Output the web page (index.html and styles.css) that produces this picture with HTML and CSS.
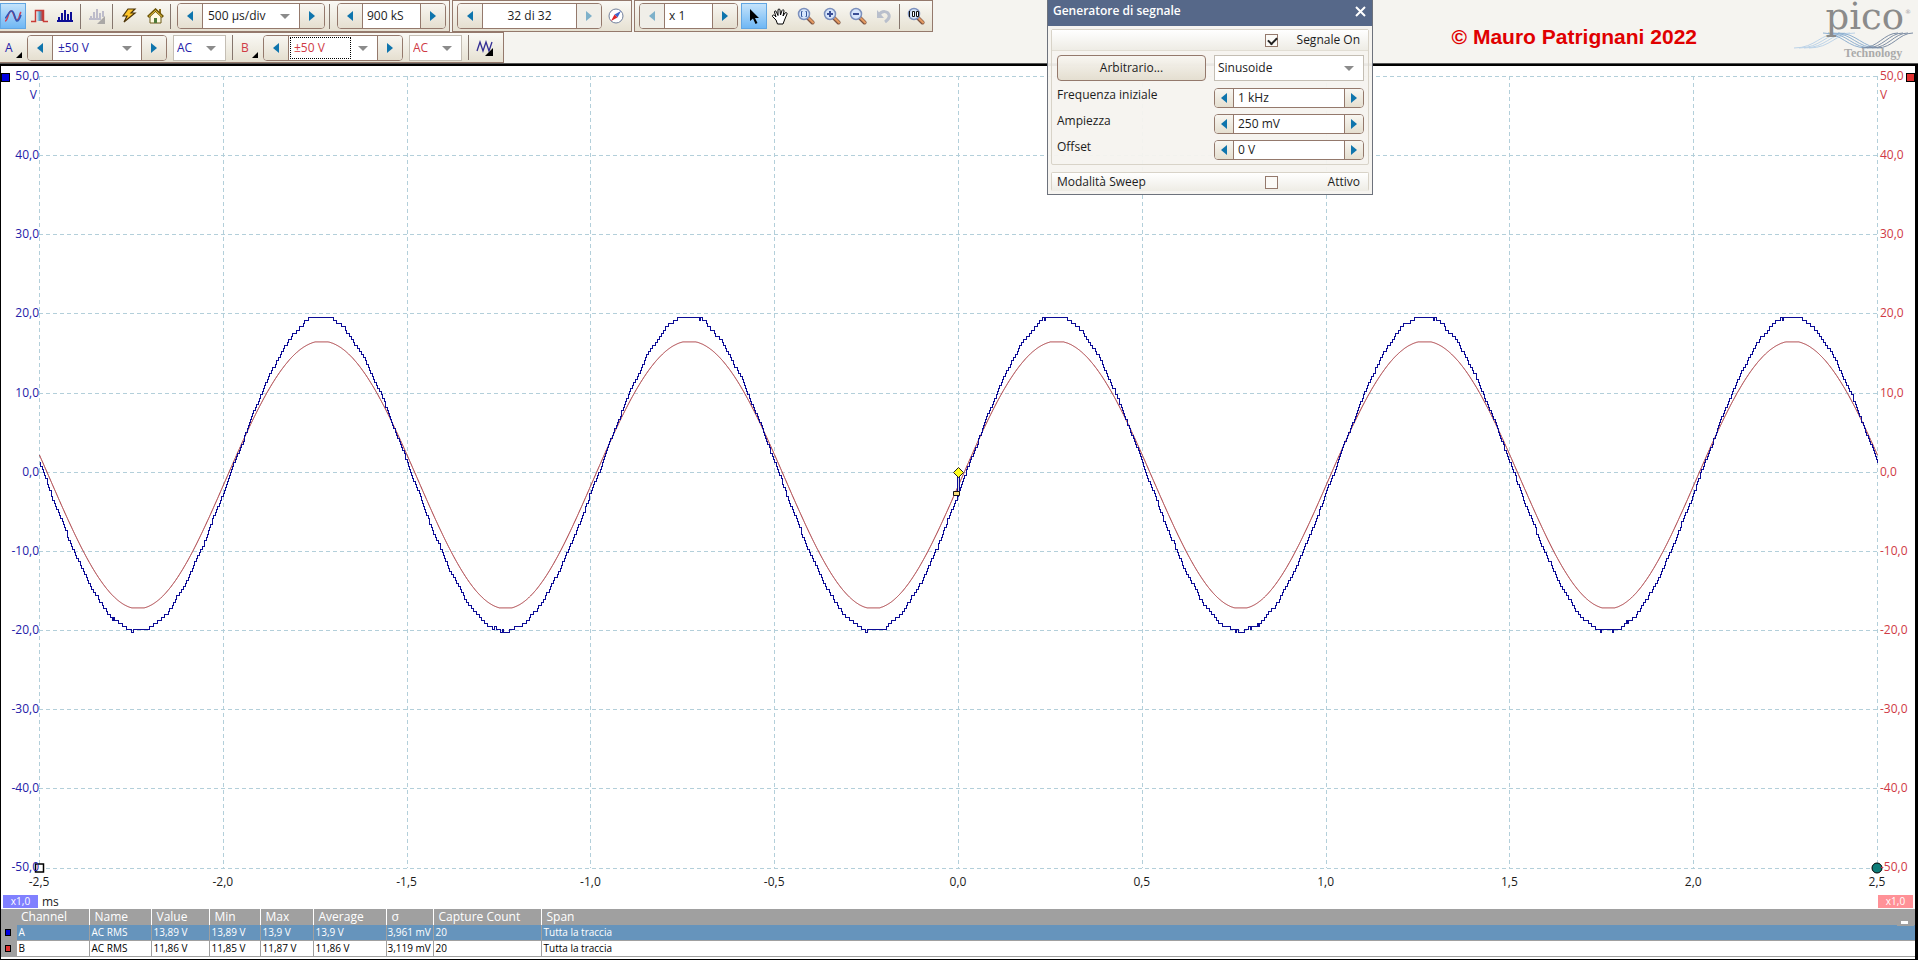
FILE: index.html
```
<!DOCTYPE html>
<html lang="it">
<head>
<meta charset="utf-8">
<title>Oscilloscopio</title>
<link rel="stylesheet" href="styles.css">
</head>
<body>
<svg class="defs" aria-hidden="true">
  <symbol id="left" viewBox="0 0 6 10"><path d="M6 0v10L0 5z" fill="#0f75ad"/></symbol>
  <symbol id="right" viewBox="0 0 6 10"><path d="M0 0v10l6-5z" fill="#0f75ad"/></symbol>
  <symbol id="lens" viewBox="0 0 18 18">
    <path d="M10.500 10.500l5 5" stroke="#7c5240" stroke-width="4" stroke-linecap="round"/>
    <path d="M11 10.500l5 5" stroke="#e39a62" stroke-width="2.200" stroke-linecap="round"/>
    <circle cx="7" cy="7" r="5.500" fill="#d7e6fb" stroke="#7c90bd" stroke-width="1.500"/>
  </symbol>
</svg>
<header class="top">
  <div class="bars">
    <div class="row">
      <div class="group g1">
        <button class="tool active" aria-label="Oscilloscopio"><svg width="18" height="16" viewBox="0 0 18 16" fill="none"><path d="M1 13C4 13 4 3 7 3s3 9 6 9 2-6 4-8" stroke="#cf4257" stroke-width="1.600"/><path d="M1 10C3 10 5 2 8 3s3 10 5 10 3-3 4-6" stroke="#3157b8" stroke-width="1.600"/></svg></button>
        <button class="tool" aria-label="Persistenza"><svg width="17" height="14" viewBox="0 0 17 14"><defs><linearGradient id="pg"><stop offset="0" stop-color="#fff"/><stop offset=".5" stop-color="#5f9fc4"/><stop offset="1" stop-color="#c8322b"/></linearGradient></defs><path d="M5 1h7v11H5z" fill="url(#pg)"/><path d="M0 12.500h4.500v-11h8v11H17" fill="none" stroke="#c93a35" stroke-width="1.500"/></svg></button>
        <button class="tool" aria-label="Spettro"><svg width="16" height="14" viewBox="0 0 16 14"><path d="M0 12h16M2 12V8M5 12V4M8 12V1M11 12V5M14 12V3" stroke="#0d0d96" stroke-width="2"/></svg></button>
        <i class="sep"></i>
        <button class="tool" aria-label="Opzioni spettro" disabled><svg width="17" height="16" viewBox="0 0 17 16"><path d="M0 11h12M2 11V8M5 11V4M8 11V1M11 11V5M14 9V3" stroke="#bdbcca" stroke-width="2"/><path d="M16 8v8H8z" fill="#aaa8a6"/></svg></button>
        <i class="sep"></i>
        <button class="tool" aria-label="Configurazione automatica"><svg width="16" height="16" viewBox="0 0 16 16"><path d="M7 1h7l-4 4h4L3 14l3-6H2z" fill="#ffc629" stroke="#4d3508" stroke-width="1.200"/></svg></button>
        <button class="tool" aria-label="Pagina iniziale"><svg width="17" height="16" viewBox="0 0 17 16"><path d="M3 8l5.500-6L14 8v7H3z" fill="#fffbe2" stroke="#6d5a16"/><path d="M12 1h2v4h-2z" fill="#8c6d1a"/><path d="M1 9l7.500-7L16 9" fill="none" stroke="#6c5406" stroke-width="3"/><path d="M2 8.500L8.500 2.500 15 8.500" fill="none" stroke="#f0ce45"/><path d="M7 10h3v5H7z" fill="#4d7a3a"/></svg></button>
        <i class="sep"></i>
        <div class="spin timebase"><button aria-label="Precedente"><svg><use href="#left"/></svg></button><span class="combo"><select aria-label="Base tempi"><option>500 µs/div</option></select></span><button aria-label="Successivo"><svg><use href="#right"/></svg></button></div>
        <i class="sep"></i>
        <div class="spin samples"><button aria-label="Meno campioni"><svg><use href="#left"/></svg></button><input aria-label="Campioni" value="900 kS"><button aria-label="Più campioni"><svg><use href="#right"/></svg></button></div>
      </div>
      <div class="group g2">
        <div class="spin buffer"><button aria-label="Buffer precedente"><svg><use href="#left"/></svg></button><input aria-label="Buffer" value="32 di 32"><button aria-label="Buffer successivo" disabled><svg><use href="#right"/></svg></button></div>
        <button class="tool" aria-label="Navigatore buffer"><svg width="16" height="16" viewBox="0 0 16 16"><circle cx="8" cy="8" r="7" fill="#fff" stroke="#71809c"/><path d="M13 3L9.500 9.500l-3-3z" fill="#3f64c8"/><path d="M3 13l3.500-6.500 3 3z" fill="#e0262b"/></svg></button>
      </div>
      <div class="group g3">
        <div class="spin zoomer"><button aria-label="Riduci" disabled><svg><use href="#left"/></svg></button><input aria-label="Zoom" value="x 1"><button aria-label="Aumenta"><svg><use href="#right"/></svg></button></div>
        <button class="tool active" aria-label="Selezione"><svg width="12" height="17" viewBox="0 0 12 17"><path d="M2 1v12l3-2.500L7.500 16l2-1L7 10h4z"/></svg></button>
        <button class="tool" aria-label="Mano"><svg width="18" height="17" viewBox="0 0 18 17"><path d="M5 12L1.500 8.500c-.5-1.500 1-2 2-1L5 9 3.500 4c0-1.500 1.500-1.500 2 0L7 7.500 7 2c.3-1.500 1.700-1.500 2 0l.5 5L11 2.500c.7-1.300 2-.8 2 .5l-1 5 2-3c1-1 2.300-.2 2 1L13.500 12 12 16H6.500z" fill="#fff" stroke="#000"/></svg></button>
        <button class="tool" aria-label="Zoom area"><svg width="18" height="18"><use href="#lens"/><path d="M5.500 4.500h-1v5h1M8.500 4.500h1v5h-1" fill="none" stroke="#31549c"/></svg></button>
        <button class="tool" aria-label="Ingrandisci"><svg width="18" height="18"><use href="#lens"/><path d="M4 7h6M7 4v6" stroke="#3a4f96" stroke-width="2"/></svg></button>
        <button class="tool" aria-label="Rimpicciolisci"><svg width="18" height="18"><use href="#lens"/><path d="M4 7h6" stroke="#3a4f96" stroke-width="2"/></svg></button>
        <button class="tool" aria-label="Annulla zoom" disabled><svg width="16" height="14" viewBox="0 0 16 14"><path d="M3 6c3-5 9-4 10 0 1 3-1 5-4 7" fill="none" stroke="#b9bfcc" stroke-width="3"/><path d="M1 1v8h7z" fill="#b9bfcc"/></svg></button>
        <i class="sep"></i>
        <button class="tool" aria-label="Zoom 100%"><svg width="18" height="18"><use href="#lens"/><path d="M2.500 4v6M5.500 4.500h2v5h-2zM9.500 4.500h2v5h-2z" fill="#fff" stroke="#111"/></svg></button>
      </div>
    </div>
    <div class="row">
      <div class="group c1">
        <button class="chan blue">A</button>
        <div class="spin range"><button aria-label="A meno"><svg><use href="#left"/></svg></button><span class="combo"><select class="blue" aria-label="Scala A"><option>±50 V</option></select></span><button aria-label="A più"><svg><use href="#right"/></svg></button></div>
        <span class="combo coupling"><select class="blue" aria-label="Accoppiamento A"><option>AC</option></select></span>
        <i class="sep"></i>
        <button class="chan red">B</button>
        <div class="spin range"><button aria-label="B meno"><svg><use href="#left"/></svg></button><span class="combo"><select class="red focus" aria-label="Scala B"><option>±50 V</option></select></span><button aria-label="B più"><svg><use href="#right"/></svg></button></div>
        <span class="combo coupling"><select class="red" aria-label="Accoppiamento B"><option>AC</option></select></span>
        <i class="sep"></i>
        <button class="tool" aria-label="Canali matematici"><svg width="18" height="16" viewBox="0 0 18 16"><path d="M1 11L4 2l3 9 3-9 3 9 3-9" fill="none" stroke="#322d94" stroke-width="1.300"/><path d="M17 8v8H9z"/></svg></button>
      </div>
    </div>
  </div>
  <div class="credit">© Mauro Patrignani 2022</div>
  <div class="logo" role="img" aria-label="pico Technology">
    <svg width="124" height="60" viewBox="0 0 124 60">
      <g fill="none">
        <g stroke="#bcd3e8"><path d="M2 48C24 48 28 33 48 33"/><path d="M7 48C29 48 33 33 53 33"/><path d="M12 48C34 48 38 33 58 33"/><path d="M17 48C39 48 43 33 63 33"/></g>
        <g stroke="#8fb0d0"><path d="M31 33C50 33 55 48 75 48"/><path d="M36 33C55 33 60 48 80 48"/><path d="M41 33C60 33 65 48 85 48"/><path d="M46 33C65 33 70 48 90 48"/></g>
        <g stroke="#7c8ca3"><path d="M70 48C86 48 92 33 106 33"/><path d="M75 48C91 48 97 33 111 33"/><path d="M80 48C96 48 102 33 116 33"/><path d="M85 48C101 48 107 33 121 33"/></g>
      </g>
      <text class="pico" x="112" y="29" text-anchor="end">pico</text>
      <text class="reg" x="113" y="14">®</text>
      <text class="tech" x="52" y="57">Technology</text>
    </svg>
  </div>
</header>

<main class="scope">
  <ol class="yaxis blue" id="ya"></ol>
  <svg class="plot" id="plot" role="img" aria-label="Tracce dei canali A e B"></svg>
  <ol class="yaxis right red" id="yb"></ol>
  <ol class="xaxis" id="xa"></ol>
  <div class="scales"><span class="tag a">x1,0</span><span class="unit">ms</span><span class="tag b">x1,0</span></div>
  <i class="mark ma"></i><i class="mark mb"></i>
</main>

<section class="measures">
  <table>
    <colgroup><col class="k0"><col class="k1"><col class="k2"><col class="k3"><col class="k4"><col class="k5"><col class="k6"><col class="k7"><col class="k8"><col></colgroup>
    <thead><tr><th></th><th>Channel</th><th>Name</th><th>Value</th><th>Min</th><th>Max</th><th>Average</th><th>σ</th><th>Capture Count</th><th>Span</th></tr></thead>
    <tbody>
      <tr class="selected"><td class="key"><i class="sw a"></i></td><td>A</td><td>AC RMS</td><td>13,89 V</td><td>13,89 V</td><td>13,9 V</td><td>13,9 V</td><td class="num">3,961 mV</td><td>20</td><td>Tutta la traccia</td></tr>
      <tr><td class="key"><i class="sw b"></i></td><td>B</td><td>AC RMS</td><td>11,86 V</td><td>11,85 V</td><td>11,87 V</td><td>11,86 V</td><td class="num">3,119 mV</td><td>20</td><td>Tutta la traccia</td></tr>
    </tbody>
  </table>
  <button class="collapse" aria-label="Riduci misure"></button>
</section>

<section class="dialog" role="dialog" aria-labelledby="dt">
  <div class="title"><h2 id="dt">Generatore di segnale</h2><button class="close" aria-label="Chiudi"><svg width="11" height="11" viewBox="0 0 11 11"><path d="M1 1l9 9M10 1L1 10" stroke="#fff" stroke-width="2"/></svg></button></div>
  <div class="panel">
    <div class="phead"><input type="checkbox" id="on" checked><label for="on">Segnale On</label></div>
    <div class="form">
      <button class="arb">Arbitrario...</button>
      <span class="combo wave"><select aria-label="Forma d'onda"><option>Sinusoide</option></select></span>
      <label for="fq">Frequenza iniziale</label>
      <div class="spin small"><button aria-label="Frequenza meno"><svg><use href="#left"/></svg></button><input id="fq" value="1 kHz"><button aria-label="Frequenza più"><svg><use href="#right"/></svg></button></div>
      <label for="am">Ampiezza</label>
      <div class="spin small"><button aria-label="Ampiezza meno"><svg><use href="#left"/></svg></button><input id="am" value="250 mV"><button aria-label="Ampiezza più"><svg><use href="#right"/></svg></button></div>
      <label for="of">Offset</label>
      <div class="spin small"><button aria-label="Offset meno"><svg><use href="#left"/></svg></button><input id="of" value="0 V"><button aria-label="Offset più"><svg><use href="#right"/></svg></button></div>
    </div>
  </div>
  <div class="panel sweep"><div class="phead"><span>Modalità Sweep</span><input type="checkbox" id="sw"><label for="sw">Attivo</label></div></div>
</section>
<script src="scope.js"></script>
</body>
</html>
```
FILE: styles.css
```
* { box-sizing: border-box; }
body { margin: 0; height: 100vh; display: flex; flex-direction: column; background: #000; color: #1c1c1c; font: 12px/16px "Open Sans", "Noto Sans", sans-serif; overflow: hidden; }
button, input, select { font: inherit; color: inherit; margin: 0; padding: 0; border: 0; background: none; border-radius: 0; }
ol { margin: 0; padding: 0; list-style: none; }
.defs { position: absolute; width: 0; height: 0; }
.blue { color: #2420a8; }
.red { color: #cf3a45; }

.top { display: flex; background: #f5f4f0; border-bottom: 1px solid #555; height: 64px; flex: none; }
.bars { flex: none; }
.row { display: flex; gap: 2px; height: 32px; }
.row + .row { height: 31px; }
.group { display: flex; align-items: center; border: 1px solid #94796c; border-left-width: 0; background: linear-gradient(#faf9f5, #e6e1d2); }
.g1 { padding-right: 3px; }
.g2, .g3 { border-left-width: 1px; padding-left: 4px; }
.g2 { padding-right: 2px; }
.g3 { padding-right: 3px; }
.c1 { padding-right: 5px; }
.tool { width: 26px; height: 26px; display: flex; align-items: center; justify-content: center; flex: none; }
.tool.active { background: linear-gradient(#c4e3fb, #6fb7f4); border: 1px solid #62a6e2; }
.g3 .active { margin-left: 3px; }
.sep { width: 1px; height: 25px; margin: 0 3px 0 2px; background: #85766d; flex: none; }
.spin { display: flex; height: 26px; border: 1px solid #94796c; border-radius: 4px; background: #fff; overflow: hidden; flex: none; }
.spin > button { width: 25px; flex: none; display: flex; align-items: center; justify-content: center; background: linear-gradient(#f8f6f1, #e5dfd0); }
.spin svg { width: 6px; height: 10px; }
.spin > button:disabled { background: #f0eee8; }
.spin > button:disabled svg { opacity: .5; }
.spin > button:first-child { border-right: 1px solid #94796c; }
.spin > button:last-child { border-left: 1px solid #94796c; }
.spin input { flex: 1; min-width: 0; padding: 0 4px; }
.combo { position: relative; flex: 1; display: flex; min-width: 0; background: #fff; }
.combo::after { content: ""; position: absolute; right: 9px; top: 50%; margin-top: -2px; border: 5px solid transparent; border-top-color: #8b8b8b; border-bottom: 0; pointer-events: none; }
.combo select { appearance: none; width: 100%; padding: 0 5px; }
.timebase { width: 148px; margin: 0 2px 0 3px; }
.samples { width: 109px; margin-left: 4px; }
.buffer { width: 145px; margin-right: 1px; }
.buffer input { text-align: center; }
.zoomer { width: 99px; }
.range { width: 140px; margin-right: 6px; }
.coupling { flex: none; width: 53px; height: 26px; border: 1px solid #c4beb4; margin-right: 4px; }
.coupling select { padding-left: 3px; }
.focus { outline: 1px dotted #000; outline-offset: -2px; margin-right: 25px; }
.chan { position: relative; width: 27px; height: 26px; padding-left: 5px; text-align: left; flex: none; }
.chan::after { content: ""; position: absolute; right: 5px; bottom: 3px; border: 3px solid #000; border-left-color: transparent; border-top-color: transparent; }
.credit { margin-left: auto; margin-right: 95px; align-self: center; padding-top: 10px; font: bold 21px/26px "Liberation Sans", Arial, sans-serif; color: #e00000; }
.logo { padding-right: 2px; flex: none; }
.pico { font: 37px "DejaVu Serif", serif; fill: #8b8b8b; }
.reg { font: 6px "DejaVu Serif", serif; fill: #9b9b9b; }
.tech { font: bold 12px "Liberation Serif", serif; fill: #aaa; }

.scope { position: relative; flex: 1; min-height: 0; margin: 2px 3px 0 1px; background: #fff; display: grid; grid-template-columns: 38px 1fr 38px; grid-template-rows: 1fr 27px 14px; padding-top: 10px; }
.plot { width: 100%; height: 100%; display: block; overflow: visible; min-height: 0; }
.yaxis { display: flex; flex-direction: column; justify-content: space-between; text-align: right; min-height: 0; }
.yaxis.right { text-align: left; padding-left: 3px; }
.yaxis li { height: 0; line-height: 0; position: relative; }
.yaxis small { font-size: inherit; position: absolute; right: 2px; top: 19px; }
.yaxis.right small { right: auto; left: 0; }
.xaxis { grid-column: 2; display: flex; justify-content: space-between; align-items: center; padding-top: 1px; }
.xaxis li { width: 0; display: flex; justify-content: center; white-space: nowrap; }
.scales { grid-column: 1 / -1; display: flex; gap: 4px; padding: 0 2px; align-items: start; }
.tag { width: 35px; height: 13px; line-height: 13px; font-size: 10px; text-align: center; color: #fff; }
.tag.a { background: #8080ff; }
.tag.b { background: #ff9197; margin-left: auto; }
.unit { line-height: 14px; }
.mark { position: absolute; top: 7px; width: 9px; height: 9px; border: 1px solid #000; }
.ma { left: 0; background: #0000e0; }
.mb { right: 0; background: #e03030; }

.measures { position: relative; flex: none; margin: 0 3px 1px 1px; background: #fff; padding-bottom: 2px; }
table { width: 100%; table-layout: fixed; border-collapse: collapse; }
th { height: 16px; padding: 0 5px; background: #a0a0a0; color: #fff; font-weight: normal; font-size: 12px; line-height: 16px; text-align: left; border-left: 1px solid #fff; }
th:nth-child(-n+2) { border-left: 0; }
td { height: 16px; padding: 0 2px; font-size: 10px; line-height: 15px; white-space: nowrap; border-left: 1px solid #a0a0a0; border-bottom: 1px solid #a0a0a0; color: #000; }
.selected td { background: #6694bc; color: #fff; }
td.key, .selected .key { background: #a0a0a0; padding: 0 0 0 4px; border: 0; }
td.num { padding: 0 1px; }
.sw { display: block; width: 6px; height: 7px; border: 1px solid #000; }
.sw.a { background: #0000e0; }
.sw.b { background: #e03030; }
.k0 { width: 15px; } .k1 { width: 73px; } .k2 { width: 62px; } .k3 { width: 58px; } .k4 { width: 51px; } .k5 { width: 53px; } .k6 { width: 73px; } .k7 { width: 47px; } .k8 { width: 108px; }
.collapse { position: absolute; right: 1px; top: 10px; width: 17px; height: 7px; background: #a0a0a0; }
.collapse::after { content: ""; position: absolute; left: 4px; top: 2px; width: 7px; height: 3px; background: #fff; }

.dialog { position: absolute; left: 1047px; top: 0; width: 326px; border: 1px solid #6d727c; border-top: 0; background: rgba(245, 243, 239, .95); padding-bottom: 3px; }
.title { display: flex; align-items: center; justify-content: space-between; height: 26px; padding: 0 6px 4px 5px; background: #566889; color: #fff; }
.title h2 { margin: 0; font-size: 12px; font-weight: 600; }
.close { display: flex; }
.panel { margin: 3px 3px 7px; border: 1px solid #d8d3c8; border-radius: 2px; }
.phead { display: flex; align-items: center; height: 21px; padding: 0 8px 0 5px; background: linear-gradient(#fff, #eeece5); border-bottom: 1px solid #e2ded4; }
.phead input { appearance: none; width: 13px; height: 13px; border: 1px solid #94796c; background: #fbfaf7; margin: 0 0 0 208px; position: relative; flex: none; }
.phead input:checked::after { content: ""; position: absolute; left: 2px; top: 2px; width: 7px; height: 4px; border: solid #222; border-width: 0 0 2px 2px; transform: rotate(-45deg); }
.phead label { margin-left: auto; }
.phead span { width: 208px; }
.phead span + input { margin-left: 0; }
.form { display: grid; grid-template-columns: 149px 150px; justify-content: space-between; row-gap: 6px; padding: 4px 4px 4px 5px; }
.form > label { line-height: 14px; }
.arb { height: 26px; border: 1px solid #94796c; border-radius: 4px; background: linear-gradient(rgba(248, 246, 241, .9), rgba(226, 220, 205, .9)); }
.wave { height: 26px; border: 1px solid #c4beb4; margin-bottom: 1px; }
.wave select { padding: 0 3px; }
.small { height: 20px; }
.small > button { width: 19px; }
.sweep { margin-bottom: 0; border-bottom: 0; }
.sweep .phead { border-bottom: 0; height: 18px; }

.grid { stroke: #b3cfda; stroke-dasharray: 4 3; shape-rendering: crispEdges; }
.ta { fill: none; stroke: #0c0c96; stroke-width: 1; shape-rendering: crispEdges; }
.tb { fill: none; stroke: #a8383e; stroke-width: 1; }
```
FILE: scope.js
```
const fmt = (v) => v.toFixed(1).replace(".", ",");
const fill = (id, from, to, unit) => {
  const list = document.getElementById(id);
  for (let i = 0; i <= 10; i++) {
    const li = document.createElement("li");
    li.textContent = fmt(from + (to - from) * i / 10);
    if (unit && i === 0) {
      const u = document.createElement("small");
      u.textContent = unit;
      li.append(u);
    }
    list.append(li);
  }
};
fill("ya", 50, -50, "V");
fill("yb", 50, -50, "V");
fill("xa", -2.5, 2.5);

const clamp = (v, lo, hi) => Math.max(lo, Math.min(hi, v));
const svg = document.getElementById("plot");
function draw() {
  const { width: w, height: h } = svg.getBoundingClientRect();
  const X = (t) => (t + 2.5) / 5 * w;
  const Y = (v) => (50 - v) / 100 * h;
  let out = "";
  for (let i = 0; i <= 10; i++) {
    const x = Math.round(w * i / 10) + 0.5;
    const y = Math.round(h * i / 10) + 0.5;
    out += `<path class="grid" d="M${x} 0V${h}M0 ${y}H${w}"/>`;
  }
  const lsb = 100 / 256;
  let a = "", b = "";
  for (let x = 0; x <= w; x++) {
    const t = x / w * 5 - 2.5;
    const pa = 2 * Math.PI * (t - 0.2655), pb = 2 * Math.PI * (t - 0.268);
    const va = -0.445 + 19.9 * Math.cos(pa) + 0.245 * Math.cos(2 * pa);
    const noise = 0.12 * Math.sin(x * 12.9) + 0.1 * Math.sin(x * 4.7);
    const qa = clamp(Math.round((va + noise) / lsb) * lsb, -20.2, 19.6);
    const vb = clamp(-0.1 + 16.9 * Math.cos(pb) - 0.3 * Math.cos(2 * pb), -17.2, 16.4);
    const ya = Math.round(Y(qa)) + 0.5;
    a += x ? `H${x + 0.5}V${ya}` : `M${x + 0.5} ${ya}`;
    b += `${x ? "L" : "M"}${x + 0.5} ${Y(vb).toFixed(1)}`;
  }
  const cx = Math.round(X(0)), cy = Math.round(Y(0));
  out += `<path class="tb" d="${b}"/><path class="ta" d="${a}"/>`;
  out += `<path d="M${cx + 0.5} ${cy}v20" stroke="#0c0c96" stroke-width="3"/><path d="M${cx + 0.5} ${cy}v20" stroke="#ddd"/>`;
  out += `<path d="M${cx - 4.5} ${cy + 19.5}h6v4h-6z" fill="#f5dc78" stroke="#111"/>`;
  out += `<path d="M${cx + 0.5} ${cy - 4.5}l5 5-5 5-5-5z" fill="#ffff20" stroke="#222"/>`;
  out += `<path d="M-3.500 ${h - 3.5}h8v8h-8z" fill="#fff" stroke="#000" stroke-width="1.500"/>`;
  out += `<circle cx="${w}" cy="${h + 0.5}" r="5" fill="#0d7c78" stroke="#000"/>`;
  svg.innerHTML = out;
}
draw();
addEventListener("resize", draw);
```
